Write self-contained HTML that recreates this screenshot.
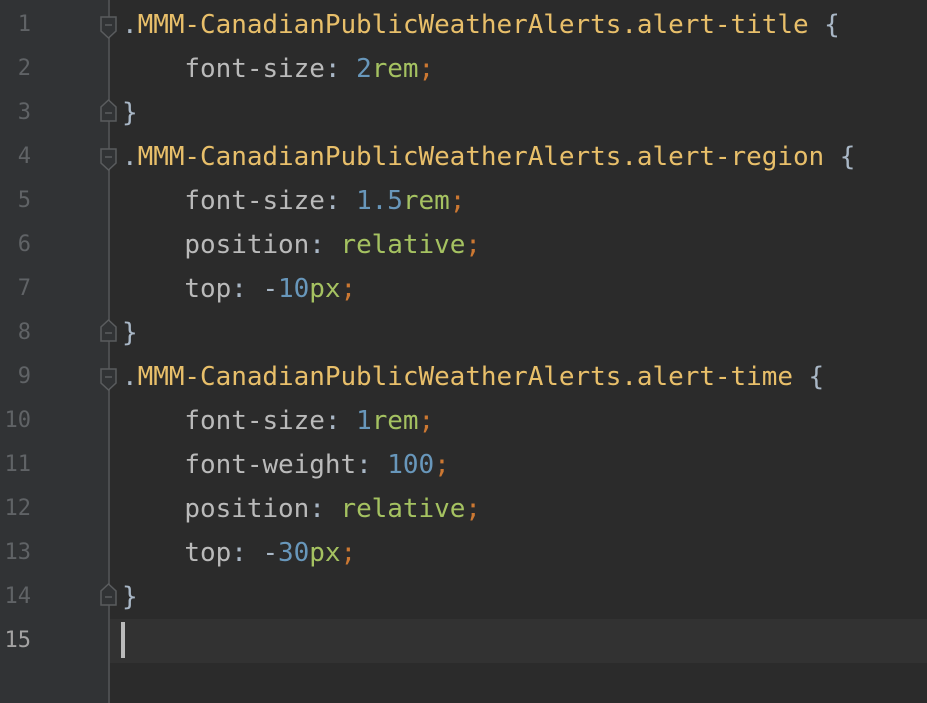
<!DOCTYPE html>
<html><head><style>
html,body{margin:0;padding:0;width:927px;height:703px;overflow:hidden;background:#2b2b2b;}
.g{position:absolute;left:0;top:0;width:109px;height:703px;background:#313335;}
.sep{position:absolute;left:108px;top:0;width:2px;height:703px;background:#4b4d4f;}
.cur{position:absolute;left:110px;top:619px;width:817px;height:44px;background:#323232;}
.ln{position:absolute;left:0;width:31px;text-align:right;font:22px "DejaVu Sans Mono",monospace;color:#606366;height:44px;line-height:44px;}
.code{position:absolute;left:122px;top:3px;font:26px/44px "DejaVu Sans Mono",monospace;color:#a9b7c6;white-space:pre;letter-spacing:-0.05px;}
.y{color:#e8bf6a}.p{color:#bababa}.n{color:#6897bb}.s{color:#a5c261}.o{color:#cc7832}.d{color:#a9b7c6}
.caret{position:absolute;left:121px;top:622px;width:4px;height:36px;background:#bbbbbb;}
svg{position:absolute;left:99px;}
</style></head><body>
<div class="g"></div><div class="sep"></div><div class="cur"></div>
<div class="ln" style="top:3px">1</div><div class="ln" style="top:47px">2</div><div class="ln" style="top:91px">3</div><div class="ln" style="top:135px">4</div><div class="ln" style="top:179px">5</div><div class="ln" style="top:223px">6</div><div class="ln" style="top:267px">7</div><div class="ln" style="top:311px">8</div><div class="ln" style="top:355px">9</div><div class="ln" style="top:399px">10</div><div class="ln" style="top:443px">11</div><div class="ln" style="top:487px">12</div><div class="ln" style="top:531px">13</div><div class="ln" style="top:575px">14</div><div class="ln" style="top:619px;color:#a4a3a3">15</div>
<svg style="top:16px" width="20" height="24"><path d="M2 1H17V15L9.5 22L2 15Z" fill="#313335" stroke="#5a5c5e" stroke-width="1.5"/><path d="M6 9H13" stroke="#5a5c5e" stroke-width="1.5"/></svg>
<svg style="top:98px" width="20" height="24"><path d="M2 23H17V9L9.5 2L2 9Z" fill="#313335" stroke="#5a5c5e" stroke-width="1.5"/><path d="M6 15H13" stroke="#5a5c5e" stroke-width="1.5"/></svg>
<svg style="top:148px" width="20" height="24"><path d="M2 1H17V15L9.5 22L2 15Z" fill="#313335" stroke="#5a5c5e" stroke-width="1.5"/><path d="M6 9H13" stroke="#5a5c5e" stroke-width="1.5"/></svg>
<svg style="top:318px" width="20" height="24"><path d="M2 23H17V9L9.5 2L2 9Z" fill="#313335" stroke="#5a5c5e" stroke-width="1.5"/><path d="M6 15H13" stroke="#5a5c5e" stroke-width="1.5"/></svg>
<svg style="top:368px" width="20" height="24"><path d="M2 1H17V15L9.5 22L2 15Z" fill="#313335" stroke="#5a5c5e" stroke-width="1.5"/><path d="M6 9H13" stroke="#5a5c5e" stroke-width="1.5"/></svg>
<svg style="top:582px" width="20" height="24"><path d="M2 23H17V9L9.5 2L2 9Z" fill="#313335" stroke="#5a5c5e" stroke-width="1.5"/><path d="M6 15H13" stroke="#5a5c5e" stroke-width="1.5"/></svg>
<div class="code"><span class="d">.</span><span class="y">MMM-CanadianPublicWeatherAlerts.alert-title</span> {
    <span class="p">font-size</span>: <span class="n">2</span><span class="s">rem</span><span class="o">;</span>
}
<span class="d">.</span><span class="y">MMM-CanadianPublicWeatherAlerts.alert-region</span> {
    <span class="p">font-size</span>: <span class="n">1.5</span><span class="s">rem</span><span class="o">;</span>
    <span class="p">position</span>: <span class="s">relative</span><span class="o">;</span>
    <span class="p">top</span>: -<span class="n">10</span><span class="s">px</span><span class="o">;</span>
}
<span class="d">.</span><span class="y">MMM-CanadianPublicWeatherAlerts.alert-time</span> {
    <span class="p">font-size</span>: <span class="n">1</span><span class="s">rem</span><span class="o">;</span>
    <span class="p">font-weight</span>: <span class="n">100</span><span class="o">;</span>
    <span class="p">position</span>: <span class="s">relative</span><span class="o">;</span>
    <span class="p">top</span>: -<span class="n">30</span><span class="s">px</span><span class="o">;</span>
}
</div>
<div class="caret"></div>
</body></html>
